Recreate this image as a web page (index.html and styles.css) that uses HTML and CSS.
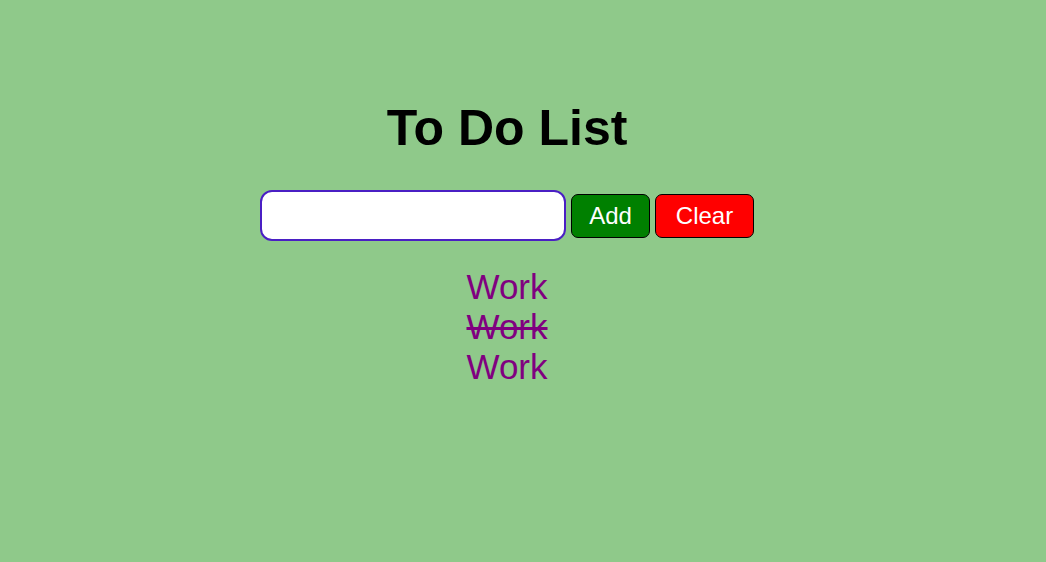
FILE: index.html
```html
<!DOCTYPE html>
<html>
<head>
<meta charset="utf-8">
<title>To Do List</title>
<link rel="stylesheet" href="styles.css">
</head>
<body>
<div class="app">
  <h1 class="title">To Do List</h1>
  <div class="entry">
    <input class="task-input" type="text">
    <button class="btn btn-add">Add</button>
    <button class="btn btn-clear">Clear</button>
  </div>
  <ul class="tasks">
    <li class="task">Work</li>
    <li class="task done">Work</li>
    <li class="task">Work</li>
  </ul>
</div>
</body>
</html>
```
FILE: styles.css
```css
html, body {
  margin: 0;
  padding: 0;
  background: #8fc98a;
  font-family: "Liberation Sans", Arial, sans-serif;
}
.app {
  padding-right: 32px;
  text-align: center;
}
.title {
  margin: 0;
  padding-top: 99px;
  font-size: 50px;
  font-weight: bold;
  line-height: normal;
  color: #000;
}
.entry {
  display: flex;
  justify-content: center;
  align-items: center;
  gap: 5px;
  margin-top: 33px;
}
.task-input {
  box-sizing: border-box;
  width: 306px;
  height: 51px;
  border: 2px solid #4a1fc4;
  border-radius: 12px;
  background: #fff;
  outline: none;
  padding: 0 10px;
  font-family: "Liberation Sans", Arial, sans-serif;
  font-size: 20px;
}
.btn {
  box-sizing: border-box;
  height: 44px;
  border: 1px solid #000;
  border-radius: 7px;
  color: #fff;
  font-family: "Liberation Sans", Arial, sans-serif;
  font-size: 24px;
  padding: 0;
  cursor: pointer;
}
.btn-add {
  width: 79px;
  background: #008000;
}
.btn-clear {
  width: 99px;
  background: #ff0000;
}
.tasks {
  list-style: none;
  margin: 26px 0 0;
  padding: 0;
}
.task {
  font-size: 35px;
  color: #800080;
  line-height: normal;
}
.done {
  text-decoration: line-through;
}
```
